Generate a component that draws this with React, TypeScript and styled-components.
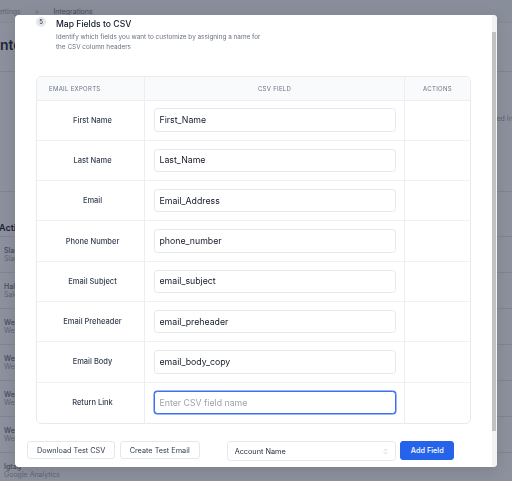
import styled, { createGlobalStyle } from "styled-components";
import { ChevronsUpDown } from "lucide-react";
import { Fragment } from "react";

const GlobalStyle = createGlobalStyle`
  * { box-sizing: border-box; }
  html, body { margin: 0; padding: 0; }
  body {
    font-family: Inter, "Noto Sans", sans-serif;
    background: #fff;
    overflow: hidden;
  }
`;

/* page behind the dialog */
const Page = styled.div`
  width: 512px;
  height: 481px;
  overflow: hidden;
  background: #fff;
`;

const TopBar = styled.header`
  height: 23px;
  display: flex;
  align-items: center;
  background: #f7f8fa;
  border-bottom: 1px solid #eceef1;
`;

const Crumbs = styled.nav`
  margin-left: -6px;
  display: flex;
  gap: 14px;
  font-size: 7px;
  color: #9ca3af;
  span:last-child {
    color: #6b7280;
  }
`;

const TitleBlock = styled.div`
  padding: 12px 0 16px;
  margin-left: -4px;
  border-bottom: 1px solid #e5e7eb;
`;

const PageTitle = styled.h1`
  margin: 0;
  font-size: 14px;
  line-height: 20px;
  font-weight: 600;
  color: #1f2937;
`;

const Overview = styled.section`
  height: 120px;
  display: flex;
  justify-content: flex-end;
  align-items: flex-start;
  padding-top: 43px;
  border-bottom: 1px solid #e5e7eb;
`;

const OverviewText = styled.p`
  margin: 0 -34px 0 0;
  font-size: 7px;
  line-height: 8px;
  color: #9ca3af;
  white-space: nowrap;
`;

const SectionHead = styled.h3`
  margin: 0;
  padding: 30px 0 0 0;
  margin-left: -1px;
  height: 45px;
  font-size: 9px;
  line-height: 12px;
  font-weight: 600;
  color: #1f2937;
  border-bottom: 1px solid #e5e7eb;
`;

const ListRow = styled.div`
  height: 36px;
  padding-left: 4px;
  display: flex;
  flex-direction: column;
  justify-content: center;
  border-bottom: 1px solid #e5e7eb;
`;

const RowName = styled.span`
  font-size: 7px;
  line-height: 8px;
  font-weight: 500;
  color: #6b7280;
`;

const RowSub = styled.span`
  font-size: 7px;
  line-height: 8px;
  color: #a3a9b3;
`;

/* dialog */
const Overlay = styled.div`
  position: fixed;
  inset: 0;
  background: rgba(28, 36, 60, 0.5);
  display: flex;
  align-items: center;
  justify-content: center;
`;

const Dialog = styled.div`
  width: 482px;
  height: 452px;
  background: #fff;
  border-radius: 4px;
  display: flex;
  overflow: hidden;
  box-shadow: 0 4px 16px rgba(0, 0, 0, 0.12);
`;

const DialogBody = styled.div`
  flex: 1;
  padding-top: 2px;
  overflow: hidden;
`;

const ScrollTrack = styled.div`
  width: 5px;
  background: #f3f3f3;
  padding-top: 17.7px;
`;

const ScrollThumb = styled.div`
  width: 4px;
  height: 399px;
  background: #c1c1c1;
`;

const StepHeader = styled.div`
  display: flex;
  gap: 10px;
  padding: 0 21px;
`;

const StepBadge = styled.span`
  flex-shrink: 0;
  width: 10px;
  height: 10px;
  border-radius: 50%;
  background: #e5e7eb;
  color: #374151;
  font-size: 6px;
  font-weight: 500;
  display: flex;
  align-items: center;
  justify-content: center;
`;

const StepTitle = styled.h2`
  margin: 0;
  font-size: 8.6px;
  line-height: 14px;
  font-weight: 500;
  color: #111827;
`;

const StepText = styled.p`
  margin: 1px 0 0;
  font-size: 6.4px;
  line-height: 10px;
  color: #6b7280;
`;

const Table = styled.div`
  margin: 24px 21px 0;
  border: 1px solid #e9eaed;
  border-radius: 5px;
  overflow: hidden;
  display: grid;
  grid-template-columns: 108px 1fr 65px;
`;

const HeadCell = styled.div<{ $align?: "left" | "center" }>`
  height: 24px;
  background: #f9fafb;
  border-bottom: 1px solid #eceef1;
  border-right: 1px solid #eceef1;
  display: flex;
  align-items: center;
  justify-content: ${(p) => (p.$align === "left" ? "flex-start" : "center")};
  padding-left: ${(p) => (p.$align === "left" ? "12px" : "0")};
  font-size: 6px;
  letter-spacing: 0.3px;
  text-transform: uppercase;
  color: #6b7280;
  &:nth-child(3) {
    border-right: none;
  }
`;

const Cell = styled.div<{ $last?: boolean }>`
  height: 40.3px;
  border-bottom: ${(p) => (p.$last ? "none" : "1px solid #f0f1f3")};
  border-right: 1px solid #eceef1;
  display: flex;
  align-items: center;
`;

const LabelCell = styled(Cell)`
  justify-content: center;
  padding-left: 4px;
  font-size: 7.5px;
  font-weight: 500;
  color: #374151;
`;

const FieldCell = styled(Cell)`
  padding: 0 8px 0 9px;
`;

const ActionCell = styled(Cell)`
  border-right: none;
`;

const FieldInput = styled.input<{ $focused?: boolean }>`
  width: 100%;
  height: 23.4px;
  padding: 0 4.5px;
  border: 1px solid ${(p) => (p.$focused ? "#3b6ff0" : "#e5e7eb")};
  box-shadow: ${(p) => (p.$focused ? "0 0 0 0.5px #3b6ff0" : "none")};
  border-radius: 3.5px;
  font-family: Inter, "Noto Sans", sans-serif;
  font-size: 8.75px;
  color: #111827;
  background: #fff;
  outline: none;
  &::placeholder {
    color: #9ca3af;
  }
`;

const Footer = styled.div`
  margin-top: 17.4px;
  padding-left: 12px;
  display: flex;
  align-items: flex-start;
`;

const ButtonGroup = styled.div`
  display: flex;
  gap: 4.6px;
  align-items: flex-start;
`;

const Button = styled.button<{ $primary?: boolean }>`
  height: ${(p) => (p.$primary ? "18.6px" : "18px")};
  padding: 0 ${(p) => (p.$primary ? "9.6px" : "8.9px")};
  border-radius: 3px;
  border: 1px solid ${(p) => (p.$primary ? "#2563eb" : "#e5e7eb")};
  background: ${(p) => (p.$primary ? "#2563eb" : "#fff")};
  color: ${(p) => (p.$primary ? "#fff" : "#374151")};
  font-family: Inter, "Noto Sans", sans-serif;
  font-size: 7.3px;
  font-weight: ${(p) => (p.$primary ? 500 : 400)};
  cursor: pointer;
`;

const Select = styled.div`
  margin-left: 27px;
  width: 169px;
  height: 20px;
  padding: 0 6px 0 7px;
  border: 1px solid #e5e7eb;
  border-radius: 3.5px;
  display: flex;
  align-items: center;
  justify-content: space-between;
  font-size: 7.3px;
  color: #1f2937;
  svg {
    color: #9ca3af;
  }
`;

const fields = [
  { label: "First Name", value: "First_Name" },
  { label: "Last Name", value: "Last_Name" },
  { label: "Email", value: "Email_Address" },
  { label: "Phone Number", value: "phone_number" },
  { label: "Email Subject", value: "email_subject" },
  { label: "Email Preheader", value: "email_preheader" },
  { label: "Email Body", value: "email_body_copy" },
  { label: "Return Link", value: "" },
];

const integrations = [
  { name: "Slack", sub: "Slack alerts" },
  { name: "Halo", sub: "Sales sync" },
  { name: "Webhook", sub: "Webhook endpoint" },
  { name: "Webhook", sub: "Webhook endpoint" },
  { name: "Webhook", sub: "Webhook endpoint" },
  { name: "Webhook", sub: "Webhook endpoint" },
  { name: "Igtag", sub: "Google Analytics" },
];

export default function App() {
  return (
    <>
      <GlobalStyle />
      <Page>
        <TopBar>
          <Crumbs>
            <span>Settings</span>
            <span>&gt;</span>
            <span>Integrations</span>
          </Crumbs>
        </TopBar>
        <TitleBlock>
          <PageTitle>Integrations</PageTitle>
        </TitleBlock>
        <Overview>
          <OverviewText>Connected Integrations</OverviewText>
        </Overview>
        <SectionHead>Active</SectionHead>
        {integrations.map((item, i) => (
          <ListRow key={i}>
            <RowName>{item.name}</RowName>
            <RowSub>{item.sub}</RowSub>
          </ListRow>
        ))}
      </Page>

      <Overlay>
        <Dialog>
          <DialogBody>
            <StepHeader>
              <StepBadge>5</StepBadge>
              <div>
                <StepTitle>Map Fields to CSV</StepTitle>
                <StepText>
                  Identify which fields you want to customize by assigning a name for
                  <br />
                  the CSV column headers
                </StepText>
              </div>
            </StepHeader>

            <Table>
              <HeadCell $align="left">Email Exports</HeadCell>
              <HeadCell>CSV Field</HeadCell>
              <HeadCell>Actions</HeadCell>
              {fields.map((f, i) => {
                const last = i === fields.length - 1;
                return (
                  <Fragment key={f.label}>
                    <LabelCell $last={last}>{f.label}</LabelCell>
                    <FieldCell $last={last}>
                      <FieldInput
                        defaultValue={f.value}
                        placeholder="Enter CSV field name"
                        $focused={last}
                      />
                    </FieldCell>
                    <ActionCell $last={last} />
                  </Fragment>
                );
              })}
            </Table>

            <Footer>
              <ButtonGroup>
                <Button>Download Test CSV</Button>
                <Button>Create Test Email</Button>
              </ButtonGroup>
              <ButtonGroup>
                <Select>
                  <span>Account Name</span>
                  <ChevronsUpDown size={7} strokeWidth={1.5} />
                </Select>
                <Button $primary>Add Field</Button>
              </ButtonGroup>
            </Footer>
          </DialogBody>
          <ScrollTrack>
            <ScrollThumb />
          </ScrollTrack>
        </Dialog>
      </Overlay>
    </>
  );
}
